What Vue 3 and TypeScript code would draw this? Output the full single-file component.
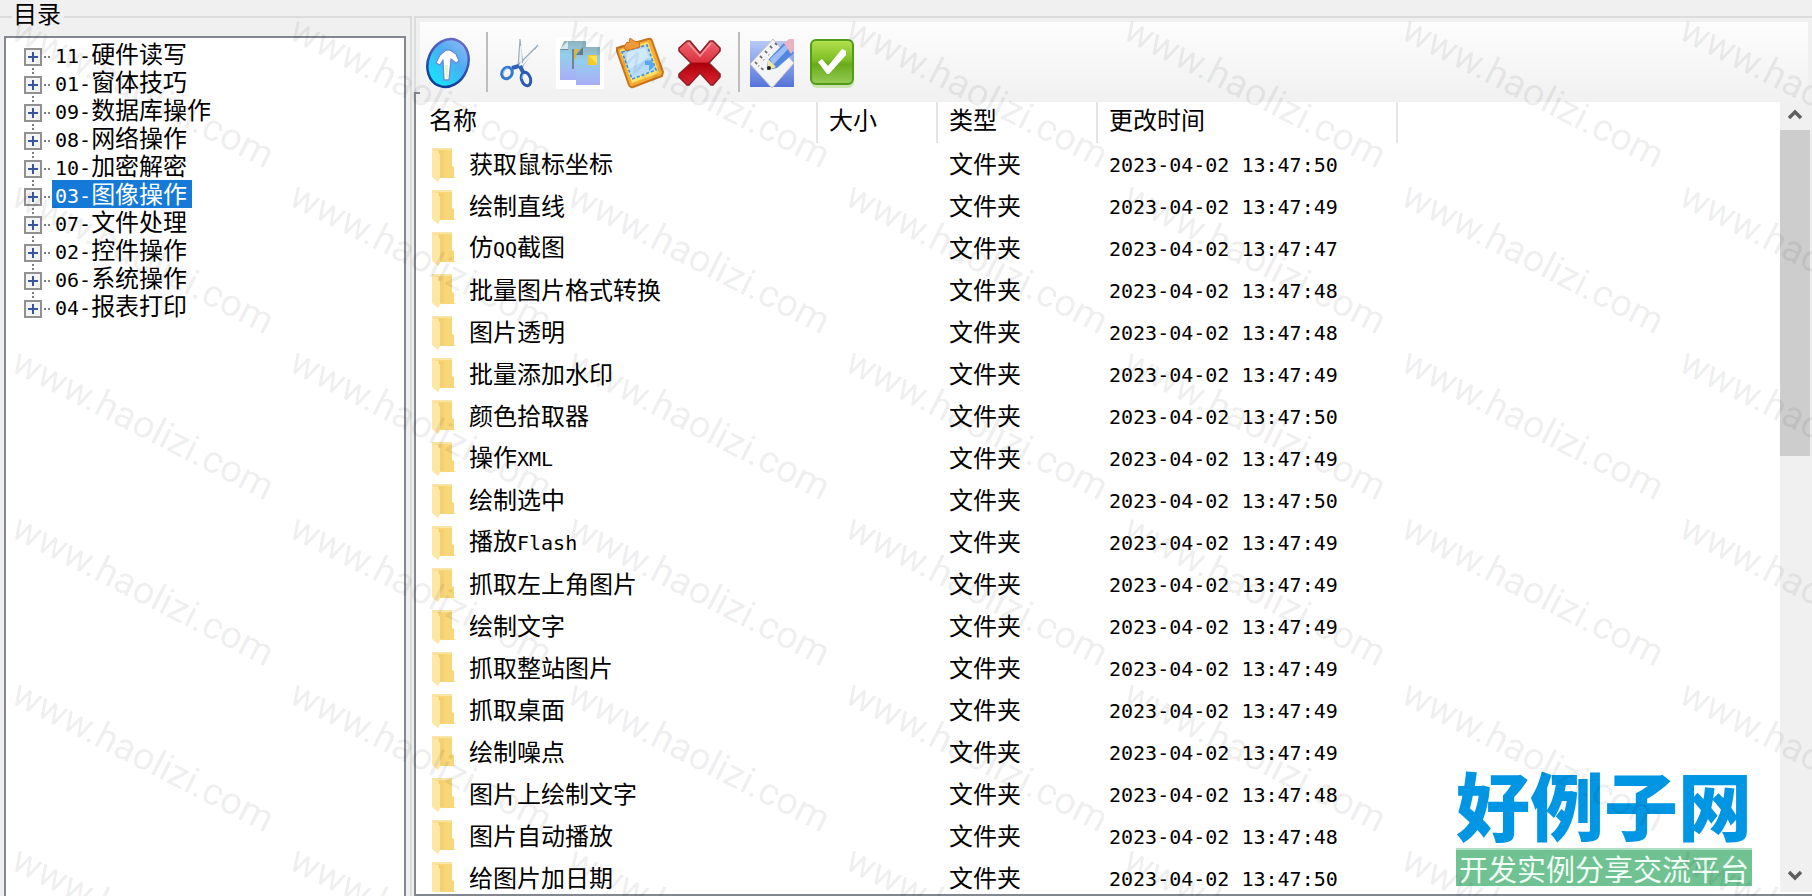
<script setup lang="ts">
import { ref } from 'vue'

interface Entry {
  name: string
  time: string
}

const tree: string[] = [
  '11-硬件读写', '01-窗体技巧', '09-数据库操作', '08-网络操作', '10-加密解密',
  '03-图像操作', '07-文件处理', '02-控件操作', '06-系统操作', '04-报表打印',
]
const selected = ref('03-图像操作')

const entry = (name: string, second: number): Entry => ({ name, time: `2023-04-02 13:47:${second}` })
const entries: Entry[] = [
  entry('获取鼠标坐标', 50),
  entry('绘制直线', 49),
  entry('仿QQ截图', 47),
  entry('批量图片格式转换', 48),
  entry('图片透明', 48),
  entry('批量添加水印', 49),
  entry('颜色拾取器', 50),
  entry('操作XML', 49),
  entry('绘制选中', 50),
  entry('播放Flash', 49),
  entry('抓取左上角图片', 49),
  entry('绘制文字', 49),
  entry('抓取整站图片', 49),
  entry('抓取桌面', 49),
  entry('绘制噪点', 49),
  entry('图片上绘制文字', 48),
  entry('图片自动播放', 48),
  entry('给图片加日期', 50),
]

// Latin runs are set in a half-width monospace face beside full-width Chinese.
const runs = (text: string) =>
  (text.match(/[\x20-\x7e]+|[^\x20-\x7e]+/g) ?? []).map((value) => ({ value, latin: /^[\x20-\x7e]/.test(value) }))

const marks = Array.from({ length: 42 }, (_, i) => ({ x: 9 + (i % 7) * 278, y: 38 + Math.floor(i / 7) * 166 }))
</script>

<template>
  <main class="window">
    <fieldset class="directory">
      <legend>目录</legend>
      <ul class="tree">
        <li v-for="item in tree" :key="item">
          <button class="expander" type="button" :aria-label="'展开 ' + item">
            <svg width="18" height="18" viewBox="0 0 18 18" aria-hidden="true">
              <rect x="1" y="1" width="16" height="16" fill="#f4f4f4" stroke="#919191" stroke-width="2" />
              <path d="M4 9h10M9 4v10" stroke="#3a55a0" stroke-width="2" />
            </svg>
          </button>
          <button class="node" :class="{ active: item === selected }" type="button" @click="selected = item">
            <span v-for="(run, i) in runs(item)" :key="i" :class="{ latin: run.latin }">{{ run.value }}</span>
          </button>
        </li>
      </ul>
    </fieldset>

    <section class="browser">
      <div class="toolbar" role="toolbar" aria-label="工具栏">
        <button type="button" aria-label="向上">
          <svg width="48" height="52" viewBox="0 0 48 52">
            <defs>
              <linearGradient id="orb" x1="0.7" y1="0" x2="0.4" y2="1">
                <stop offset="0" stop-color="#8bb5f5" /><stop offset=".4" stop-color="#4cadf2" /><stop offset="1" stop-color="#14e4ff" />
              </linearGradient>
              <linearGradient id="rim" x1="0" y1="0" x2="0" y2="1">
                <stop offset="0" stop-color="#6668c8" /><stop offset="1" stop-color="#073c96" />
              </linearGradient>
            </defs>
            <ellipse cx="24" cy="26" rx="20" ry="24.5" transform="rotate(22 24 26)" fill="url(#orb)" stroke="url(#rim)" stroke-width="2.5" />
            <path d="M20 43l-1-20-3 5-4-2 4-8 6-5h4l6 4 3 7-3 2-5-4-2 21z" fill="#fff" stroke="#7188d2" stroke-width="1.3" stroke-linejoin="round" />
            <path d="M21 28h3v13h-2z" fill="#e5f6c7" />
          </svg>
        </button>
        <span class="separator"></span>
        <button type="button" aria-label="剪切">
          <svg width="48" height="52" viewBox="0 0 48 52">
            <path d="M24 2l3 27-5 1zM42 8L25 31l-3-3z" fill="#e1e8ee" stroke="#9aacbd" stroke-width="1.1" />
            <path d="M39 13L26 28M25 9v19" stroke="#fff" stroke-width="1.2" />
            <path d="M24 29l4 8M23 29l-7 2" stroke="#2e61b8" stroke-width="4" />
            <ellipse cx="11" cy="36" rx="5" ry="6" transform="rotate(28 11 36)" fill="none" stroke="#3578d2" stroke-width="3" />
            <ellipse cx="30" cy="42" rx="4.5" ry="7" transform="rotate(-18 30 42)" fill="none" stroke="#2859b5" stroke-width="3" />
            <path d="M7 37q1-5 5-6M26 42q0-4 2-5" fill="none" stroke="#87bdf4" stroke-width="1.2" />
          </svg>
        </button>
        <button type="button" aria-label="复制">
          <svg width="48" height="52" viewBox="0 0 48 52">
            <defs>
              <linearGradient id="sheet" x1="0" y1="0" x2="0" y2="1">
                <stop offset="0" stop-color="#8fb3bd" /><stop offset=".35" stop-color="#93cfee" /><stop offset="1" stop-color="#a9aef6" />
              </linearGradient>
            </defs>
            <path d="M0 0h48v52H0z" fill="#fff" />
            <path d="M8 4h22v39H4V13z" fill="url(#sheet)" />
            <path d="M4 13h8V4z" fill="#71868f" /><path d="M12 4v8H4" fill="#d5e9ed" />
            <path d="M16 12h6v3l-4 3v14h-2z" fill="#6d8790" />
            <path d="M18 12h6v5h-3v5h-3z" fill="#dbb441" />
            <path d="M25 10h19v38H20V17z" fill="url(#sheet)" />
            <path d="M20 18h7v-8z" fill="#5f7e8a" />
            <path d="M32 18h9v10h-9z" fill="#f5ca24" /><path d="M33 19l8 8v-8z" fill="#ffe14e" />
          </svg>
        </button>
        <button type="button" aria-label="粘贴">
          <svg width="48" height="52" viewBox="0 0 48 52">
            <path d="M1 11L32 2q3-1 4 2l11 31-1 4-29 11q-3 1-4-2L1 14z" fill="#f4ad36" stroke="#c9741b" stroke-width="2" />
            <path d="M4 13L32 5l11 31-27 10z" fill="#ffe267" />
            <path d="M6 15L31 8l9 25-24 9z" fill="#b7dcfb" stroke="#3e91df" stroke-width="1.6" stroke-dasharray="3 2" />
            <path d="M9 16l20-5 4 10-20 11z" fill="#d9efff" opacity=".7" />
            <path d="M8 10l3-5 2 1 1-5 4 3 5 1 1 5-14 4z" fill="#f19a3c" stroke="#cb711d" />
            <path d="M29 24l7-1 2 7-5 4v-6h-4z" fill="#58a9ef" />
          </svg>
        </button>
        <button type="button" aria-label="删除">
          <svg width="48" height="52" viewBox="0 0 48 52">
            <defs>
              <linearGradient id="cross" x1="0" y1="0" x2="0" y2="1">
                <stop offset="0" stop-color="#ef6670" /><stop offset=".48" stop-color="#dc3340" /><stop offset=".5" stop-color="#a80009" /><stop offset="1" stop-color="#e22432" />
              </linearGradient>
            </defs>
            <path d="M11 4h3l10 12L34 4h3l7 7v3L33 26l11 11v3l-7 8h-2L24 36 13 48h-2l-8-8v-3l12-11L3 14v-3z" fill="url(#cross)" stroke="#8c2228" stroke-width="1.6" stroke-linejoin="round" />
            <path d="M12 6l12 13L35 6" fill="none" stroke="#ffb5b9" stroke-width="1.5" opacity=".7" />
          </svg>
        </button>
        <span class="separator"></span>
        <button type="button" aria-label="编辑">
          <svg width="48" height="52" viewBox="0 0 48 52">
            <defs>
              <linearGradient id="tile" x1="0" y1="0" x2="0" y2="1">
                <stop offset="0" stop-color="#b9c9f6" /><stop offset="1" stop-color="#5574da" />
              </linearGradient>
            </defs>
            <path d="M2 4h44v46H2z" fill="url(#tile)" />
            <path d="M25 2l21 24-22 25L2 27z" fill="#f4f4f5" stroke="#c1c4cc" />
            <path d="M22 9l3 3M17 14l4 4M12 19l4 4M7 25l4 4M27 6l2 2M13 31l3 2" stroke="#6b7079" stroke-width="1.8" stroke-dasharray="3 2" />
            <path d="M20 23L36 6l10 10-17 15-10 2z" fill="#5386df" />
            <path d="M22 22L37 8l4 3-16 17z" fill="#9ebdf8" />
            <path d="M36 6l5-4h5v10l-3 5z" fill="#ebb2bf" />
            <path d="M20 22l8 8-8 3z" fill="#f3e6a0" /><circle cx="21" cy="31" r="2" fill="#222" />
          </svg>
        </button>
        <button type="button" aria-label="确定">
          <svg width="48" height="52" viewBox="0 0 48 52">
            <defs>
              <linearGradient id="ok" x1="0" y1="0" x2="0" y2="1">
                <stop offset="0" stop-color="#b4e24f" /><stop offset=".45" stop-color="#7fbe25" /><stop offset=".55" stop-color="#68ab1a" /><stop offset="1" stop-color="#96cc58" />
              </linearGradient>
            </defs>
            <rect x="3" y="6" width="43" height="45" rx="6" fill="#b8dc93" opacity=".65" />
            <rect x="3" y="3" width="42" height="44" rx="5" fill="url(#ok)" stroke="#519b17" stroke-width="2" />
            <path d="M10 25l4-3 6 7 14-17 4 2v4L21 37h-2z" fill="#fff" />
          </svg>
        </button>
      </div>

      <div class="list">
        <div class="content">
          <table>
            <colgroup>
              <col class="col-name"><col class="col-size"><col class="col-type"><col class="col-time"><col>
            </colgroup>
            <thead>
              <tr><th>名称</th><th>大小</th><th>类型</th><th>更改时间</th><td></td></tr>
            </thead>
            <tbody>
              <tr v-for="item in entries" :key="item.name">
                <td>
                  <div class="file">
                    <svg width="24" height="34" viewBox="0 0 24 34" aria-hidden="true">
                      <path d="M0 0h20v18l2 1v10l2 1H6V3H0z" fill="#f8d778" />
                      <path d="M7 3h5v26H7z" fill="#f4d070" />
                      <path d="M0 0h20v2H4L0 1z" fill="#fae5a8" />
                      <path d="M0 1l5 2 3 4v24l-2 3-6-5z" fill="#fde7a4" />
                    </svg>
                    <span><span v-for="(run, i) in runs(item.name)" :key="i" :class="{ latin: run.latin }">{{ run.value }}</span></span>
                  </div>
                </td>
                <td></td>
                <td>文件夹</td>
                <td><time class="latin">{{ item.time }}</time></td>
                <td></td>
              </tr>
            </tbody>
          </table>
        </div>
        <div class="scrollbar">
          <button type="button" aria-label="向上滚动">
            <svg width="14" height="12" viewBox="0 0 14 12"><path d="M1 10l6-6 6 6" fill="none" stroke="#606060" stroke-width="3.5" /></svg>
          </button>
          <div class="track"><div class="thumb"></div></div>
          <button type="button" aria-label="向下滚动">
            <svg width="14" height="12" viewBox="0 0 14 12"><path d="M1 2l6 6 6-6" fill="none" stroke="#606060" stroke-width="3.5" /></svg>
          </button>
        </div>
      </div>
    </section>

    <aside class="brand">
      <strong>好例子网</strong>
      <span>开发实例分享交流平台</span>
    </aside>

    <svg class="watermark" aria-hidden="true">
      <text v-for="mark in marks" :key="`${mark.x}-${mark.y}`" :transform="`translate(${mark.x} ${mark.y}) rotate(27)`">www.haolizi.com</text>
    </svg>
  </main>
</template>

<style>
body {
  margin: 0;
}
</style>

<style scoped>
.window {
  position: relative;
  display: grid;
  grid-template-columns: 412px minmax(0, 1fr);
  column-gap: 2px;
  height: 100vh;
  overflow: hidden;
  background: #f0f0f0;
  color: #000;
  font: 24px/28px "Noto Sans CJK SC", sans-serif;
}

button {
  margin: 0;
  padding: 0;
  border: 0;
  background: none;
  color: inherit;
  font: inherit;
}

svg {
  display: block;
}

.latin {
  font-family: "DejaVu Sans Mono", monospace;
  font-size: 20px;
  white-space: pre;
}

.directory {
  min-width: 0;
  height: 100vh;
  box-sizing: border-box;
  margin: 0;
  padding: 2px 4px 0;
  border: 2px solid #dcdcdc;
  border-width: 2px 2px 0 0;
}

.directory legend {
  margin-left: 8px;
  padding: 0 3px 8px 1px;
  line-height: 26px;
}

.tree {
  box-sizing: border-box;
  height: calc(100vh - 36px);
  margin: 0;
  padding: 2px 0 0 18px;
  border: 2px solid #828790;
  border-bottom: 0;
  background: #fff;
  list-style: none;
}

.tree li {
  display: flex;
  height: 28px;
}

.expander {
  width: 28px;
  padding: 8px 0 2px;
  background:
    repeating-linear-gradient(90deg, #808080 0 2px, transparent 2px 4px) 20px 16px / 6px 2px no-repeat,
    repeating-linear-gradient(#808080 0 2px, transparent 2px 4px) 8px 0 / 2px 100% no-repeat;
}

.tree li:first-child .expander {
  background:
    repeating-linear-gradient(90deg, #808080 0 2px, transparent 2px 4px) 20px 16px / 6px 2px no-repeat;
}

.node {
  padding: 0 5px 2px 3px;
  line-height: 26px;
  white-space: nowrap;
}

.node.active {
  background: #1479d7;
  color: #fff;
}

.browser {
  display: flex;
  flex-direction: column;
  min-width: 0;
  height: calc(100vh - 16px);
  box-sizing: border-box;
  margin-top: 16px;
  border-top: 2px solid #dcdcdc;
}

.toolbar {
  display: flex;
  flex: none;
  align-items: center;
  height: 84px;
  box-sizing: border-box;
  margin-right: 4px;
  padding: 4px 0 0 2px;
  border-left: 2px solid #dcdcdc;
  background: linear-gradient(#fdfdfd, #f0f0f0) 4px 4px no-repeat;
}

.toolbar button {
  display: flex;
  align-items: center;
  justify-content: center;
  width: 60px;
  height: 60px;
}

.toolbar svg {
  margin-top: 2px;
}

.separator {
  width: 2px;
  height: 60px;
  margin: 0 2px 0 8px;
  background: #bdbdbd;
}

.list {
  position: relative;
  display: flex;
  flex: 1;
  min-height: 0;
  border: 2px solid #828790;
  border-width: 0 0 2px 2px;
  background: #fff;
}

.list::before {
  position: absolute;
  bottom: 100%;
  left: -2px;
  width: 4px;
  height: 8px;
  border: 2px solid #828790;
  border-width: 2px 0 0 2px;
  content: "";
}

.content {
  flex: 1;
  min-width: 0;
  margin-bottom: 2px;
  overflow: hidden;
}

table {
  width: 100%;
  border-collapse: separate;
  border-spacing: 0;
  table-layout: fixed;
}

.col-name {
  width: 402px;
}

.col-size {
  width: 120px;
}

.col-type {
  width: 160px;
}

.col-time {
  width: 300px;
}

th,
td {
  height: 40px;
  padding: 0 0 2px 11px;
  text-align: left;
  font-weight: 400;
  white-space: nowrap;
}

th {
  height: 34px;
  padding-bottom: 7px;
  border-right: 2px solid #e5e5e5;
}

th:first-child {
  padding-left: 13px;
}

td:first-child {
  padding-left: 16px;
}

thead td {
  height: 36px;
  padding: 0;
}

.file {
  display: flex;
  align-items: center;
  gap: 13px;
}

.file svg {
  margin-top: 4px;
}

.scrollbar {
  display: flex;
  flex-direction: column;
  width: 32px;
  margin-bottom: 2px;
  background: #f0f0f0;
}

.scrollbar button {
  display: flex;
  align-items: center;
  justify-content: center;
  width: 30px;
  height: 28px;
  padding-bottom: 4px;
  box-sizing: border-box;
}

.track {
  flex: 1;
}

.thumb {
  width: 30px;
  height: 44.4%;
  background: #cdcdcd;
}

.brand {
  position: absolute;
  right: 60px;
  bottom: 10px;
  text-align: center;
  white-space: nowrap;
}

.brand strong {
  display: block;
  margin-bottom: 6px;
  color: #0096e3;
  font-size: 74px;
  font-weight: 900;
  line-height: 78px;
}

.brand span {
  display: block;
  border-top: 2px solid #b0dcc3;
  background: #70c293;
  color: #f1fff6;
  font-size: 29px;
  line-height: 36px;
}

.watermark {
  position: absolute;
  inset: 0;
  width: 100%;
  height: 100%;
  overflow: hidden;
  pointer-events: none;
}

.watermark text {
  fill: #000;
  fill-opacity: 0.08;
  font: 38px Roboto, sans-serif;
}
</style>
